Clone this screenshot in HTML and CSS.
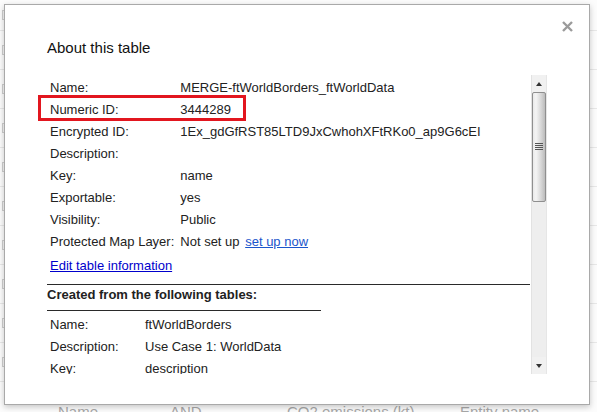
FILE: index.html
```html
<!DOCTYPE html>
<html>
<head>
<meta charset="utf-8">
<title>About this table</title>
<link rel="stylesheet" href="styles.css">
</head>
<body>
<div class="page">
  <div class="bg-row bg-first"><span class="chk"></span></div>
  <div class="bg-row"><span class="chk"></span></div>
  <div class="bg-row"><span class="chk"></span></div>
  <div class="bg-row"><span class="chk"></span></div>
  <div class="bg-row"><span class="chk"></span></div>
  <div class="bg-row"><span class="chk"></span></div>
  <div class="bg-row"><span class="chk"></span></div>
  <div class="bg-row"><span class="chk"></span></div>
  <div class="bg-row"><span class="chk"></span></div>
  <div class="bg-row"><span class="chk"></span></div>
  <div class="bg-head">
    <span class="bg-c1">Name</span>
    <span class="bg-c2">AND</span>
    <span class="bg-c3">CO2 emissions (kt)</span>
    <span class="bg-c4">Entity name</span>
  </div>
</div>

<div class="dialog">
  <div class="dlg-head">
    <h1 class="dlg-title">About this table</h1>
    <span class="close" title="Close">
      <svg width="11" height="11" viewBox="0 0 11 11"><path d="M1 1 L10 10 M10 1 L1 10" stroke="#9b9b9b" stroke-width="2.4" fill="none"/></svg>
    </span>
  </div>
  <div class="scroll">
    <div class="scroll-content">
      <table class="info main">
        <tr><td class="lbl">Name:</td><td>MERGE-ftWorldBorders_ftWorldData</td></tr>
        <tr><td class="lbl">Numeric ID:</td><td>3444289</td></tr>
        <tr><td class="lbl">Encrypted ID:</td><td>1Ex_gdGfRST85LTD9JxCwhohXFtRKo0_ap9G6cEI</td></tr>
        <tr><td class="lbl">Description:</td><td></td></tr>
        <tr><td class="lbl">Key:</td><td>name</td></tr>
        <tr><td class="lbl">Exportable:</td><td>yes</td></tr>
        <tr><td class="lbl">Visibility:</td><td>Public</td></tr>
        <tr><td class="lbl">Protected Map Layer:</td><td>Not set up <a class="setup" href="#">set up now</a></td></tr>
      </table>
      <div class="edit-row"><a class="edit" href="#">Edit table information</a></div>
      <div class="sources">
        <div class="src-title">Created from the following tables:</div>
        <table class="info src">
          <tr><td class="lbl">Name:</td><td>ftWorldBorders</td></tr>
          <tr><td class="lbl">Description:</td><td>Use Case 1: WorldData</td></tr>
          <tr><td class="lbl">Key:</td><td>description</td></tr>
        </table>
      </div>
    </div>
    <div class="vscroll">
      <div class="sb-btn"><span class="arr-up"></span></div>
      <div class="sb-thumb"><span class="grip"></span></div>
      <div class="sb-track"></div>
      <div class="sb-btn"><span class="arr-down"></span></div>
    </div>
  </div>
  <div class="highlight"></div>
</div>
</body>
</html>
```
FILE: styles.css
```css
* { box-sizing: border-box; }
html, body { margin: 0; padding: 0; }
body {
  width: 597px;
  height: 412px;
  overflow: hidden;
  position: relative;
  background: #fcfcfc;
  font-family: "Liberation Sans", Arial, sans-serif;
}

/* background page */
.page { width: 597px; }
.bg-row {
  height: 39px;
  border-bottom: 1px solid #e8e8e8;
  display: flex;
  align-items: center;
}
.bg-first { height: 31px; }
.chk {
  width: 7px;
  height: 10px;
  margin-left: 2px;
  border: 1px solid #cfcfcf;
  background: #f4f4f4;
}
.bg-head {
  display: flex;
  padding-top: 21px;
  font-size: 15px;
  line-height: 18px;
  color: #a8a8a8;
  white-space: nowrap;
}
.bg-c1 { margin-left: 58px; width: 112px; }
.bg-c2 { width: 117px; }
.bg-c3 { width: 173px; }

/* dialog */
.dialog {
  position: absolute;
  left: 4px;
  top: 4px;
  width: 586px;
  height: 401px;
  background: #fff;
  border: 1px solid #a9a9a9;
  box-shadow: 0 2px 6px rgba(0, 0, 0, 0.22);
  color: #222;
}
.dlg-head {
  display: flex;
  justify-content: space-between;
  align-items: flex-start;
  padding-left: 42px;
  padding-right: 16px;
  height: 70px;
}
.dlg-title {
  margin: 34px 0 0 0;
  font-size: 15px;
  line-height: 18px;
  font-weight: normal;
  color: #111;
}
.close {
  display: block;
  width: 11px;
  height: 11px;
  margin-top: 16px;
  cursor: pointer;
}
.close svg { display: block; }

.scroll {
  display: flex;
  margin-left: 42px;
  width: 500px;
  height: 299px;
  overflow: hidden;
}
.scroll-content {
  flex: 1;
  padding-top: 2px;
  padding-right: 1px;
  overflow: hidden;
  font-size: 13px;
  line-height: 16px;
}
.info {
  border-collapse: collapse;
  font-size: 13px;
  line-height: 16px;
  table-layout: fixed;
}
.info td {
  padding: 3px;
  white-space: nowrap;
  height: 22px;
  vertical-align: top;
}
.main td.lbl { width: 129px; }
.src { margin-top: 3px; }
.src td.lbl { width: 95px; }
a.setup { color: #1a55cc; margin-left: 2px; }
.edit-row { padding: 3px; margin-top: 2px; height: 22px; }
a.edit { color: #0000cc; }

.sources {
  margin-top: 7px;
  border-top: 1px solid #2a2a2a;
}
.src-title {
  width: 274px;
  padding: 2px 0 7px;
  font-weight: bold;
  border-bottom: 1px solid #2a2a2a;
}

/* fake scrollbar */
.vscroll {
  width: 16px;
  display: flex;
  flex-direction: column;
  background: #efefef;
  border-left: 1px solid #e2e2e2;
  border-right: 1px solid #e6e6e6;
}
.sb-btn {
  height: 17px;
  display: flex;
  align-items: center;
  justify-content: center;
  background: #f1f1f1;
}
.arr-up {
  width: 0; height: 0;
  border-left: 3.5px solid transparent;
  border-right: 3.5px solid transparent;
  border-bottom: 4px solid #333;
}
.arr-down {
  width: 0; height: 0;
  border-left: 3.5px solid transparent;
  border-right: 3.5px solid transparent;
  border-top: 4px solid #333;
}
.sb-thumb {
  height: 110px;
  border: 1px solid #8f8f8f;
  border-radius: 2px;
  background: linear-gradient(to right, #e9e9e9, #f4f4f4 25%, #d8d8d8 65%, #bcbcbc);
  display: flex;
  justify-content: center;
  padding-top: 50px;
}
.grip {
  display: block;
  width: 8px;
  height: 8px;
  background: repeating-linear-gradient(to bottom, #555 0 1px, transparent 1px 2px);
}
.sb-track { flex: 1; background: #eeeeee; }

/* annotation */
.highlight {
  position: absolute;
  left: 33px;
  top: 90px;
  width: 208px;
  height: 26px;
  border: 3px solid #e2161f;
}
```
